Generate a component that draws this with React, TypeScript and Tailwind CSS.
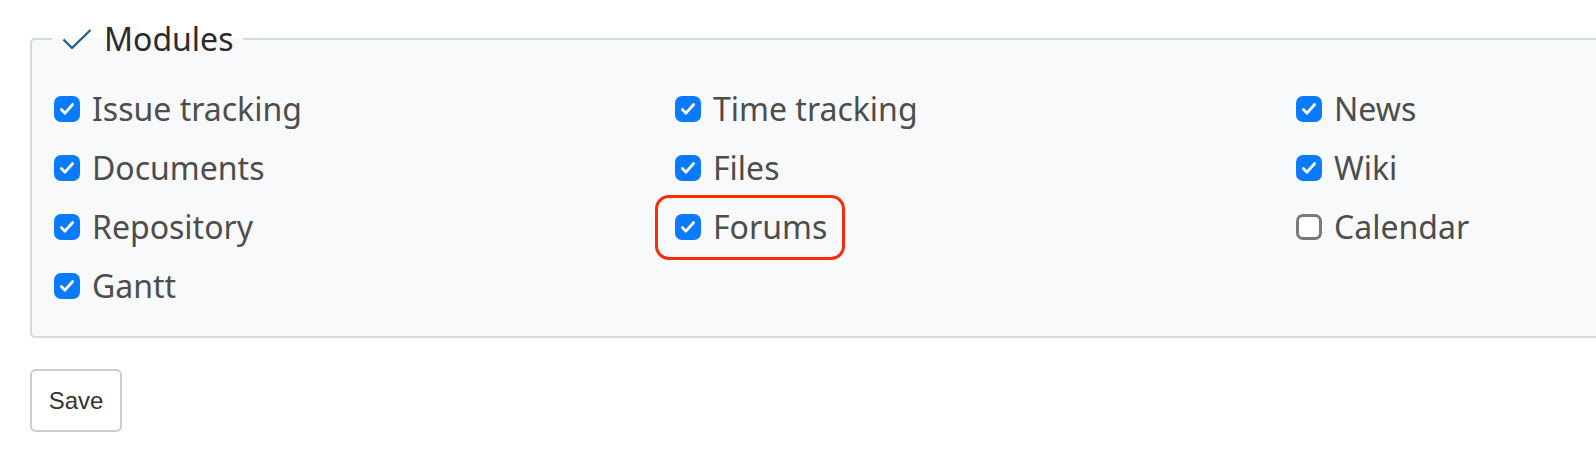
import React from "react";

const modules = [
  { label: "Issue tracking", checked: true },
  { label: "Time tracking", checked: true },
  { label: "News", checked: true },
  { label: "Documents", checked: true },
  { label: "Files", checked: true },
  { label: "Wiki", checked: true },
  { label: "Repository", checked: true },
  { label: "Forums", checked: true, highlight: true },
  { label: "Calendar", checked: false },
  { label: "Gantt", checked: true },
];

function Box({ checked }: { checked: boolean }) {
  if (!checked) {
    return <span className="block h-[26px] w-[26px] shrink-0 rounded-[7px] border-[3px] border-[#7a7a7a] bg-white" />;
  }
  return (
    <span className="flex h-[26px] w-[26px] shrink-0 items-center justify-center rounded-[7px] bg-[#0a7aff]">
      <svg width="18" height="18" viewBox="0 0 16 16" fill="none">
        <path d="M3 8.5l3.2 3.2L13 4" stroke="white" strokeWidth="2.5" strokeLinecap="round" strokeLinejoin="round" />
      </svg>
    </span>
  );
}

export default function App() {
  return (
    <div className="h-[452px] w-[1596px] overflow-hidden bg-white font-['Noto_Sans',sans-serif]">
      <div className="pl-[30px] pt-[19px]">
        <fieldset className="w-[1900px] rounded-[5px] border-2 border-[#d3d9e0] bg-[#f8f9fb] pb-[21px] pl-[22px]">
          <legend className="-ml-[2px] flex items-center gap-[12px] px-[10px] text-[32px] leading-[40px] text-[#2b2b2b]">
            <svg width="30" height="20" viewBox="0 0 30 20" fill="none">
              <path d="M1.5 10.5l8.5 8.5L28.5 1" stroke="#1d5c88" strokeWidth="2.2" />
            </svg>
            Modules
          </legend>
          <div className="mt-[20px] grid grid-cols-[621px_621px_621px]">
            {modules.map((m) => (
              <div key={m.label} className="flex h-[59px] items-center">
                <label className="relative flex items-center gap-[12px] text-[32px] text-[#4d4d4d]">
                  <Box checked={m.checked} />
                  <span>{m.label}</span>
                  {m.highlight && (
                    <span className="absolute -bottom-[9px] -left-[20px] -right-[18px] -top-[8px] rounded-[14px] border-[3px] border-[#fa2a0a]" />
                  )}
                </label>
              </div>
            ))}
          </div>
        </fieldset>
        <button className="mt-[31px] h-[63px] w-[92px] rounded-[6px] border-2 border-[#cccccc] bg-white font-['Liberation_Sans',sans-serif] text-[24px] text-[#333]">
          Save
        </button>
      </div>
    </div>
  );
}
